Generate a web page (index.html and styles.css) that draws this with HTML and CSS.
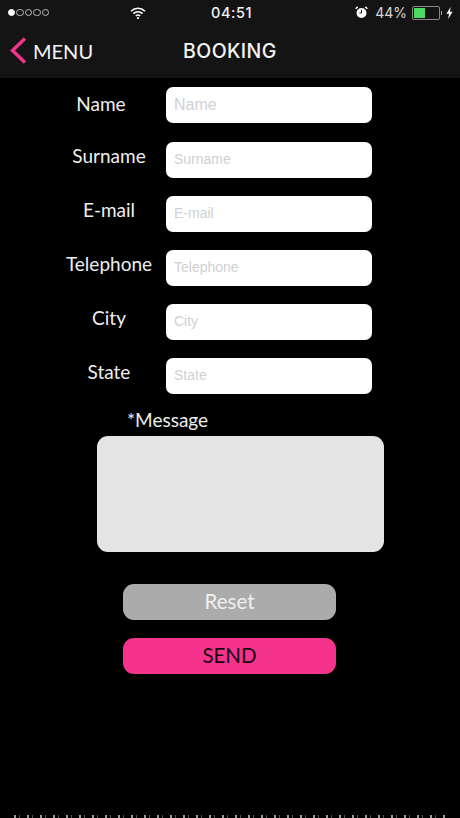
FILE: index.html
```html
<!DOCTYPE html>
<html>
<head>
<title>Booking</title>
<link rel="stylesheet" href="styles.css">
</head>
<body>
<div class="screen">
  <div class="topbar">
    <div class="status">
      <div class="signal"><i class="on"></i><i></i><i></i><i></i><i></i></div>
      <svg class="wifi" width="16" height="12" viewBox="0 0 16 12">
        <path d="M1 4.2a10 10 0 0 1 14 0" fill="none" stroke="#fff" stroke-width="1.5"/>
        <path d="M3.4 6.6a6.6 6.6 0 0 1 9.2 0" fill="none" stroke="#fff" stroke-width="1.5"/>
        <path d="M5.8 9a3.2 3.2 0 0 1 4.4 0" fill="none" stroke="#fff" stroke-width="1.5"/>
        <circle cx="8" cy="11" r="1.1" fill="#fff"/>
      </svg>
      <div class="time">04:51</div>
      <div class="status-right">
        <svg class="alarm" width="13" height="13" viewBox="0 0 13 13">
          <circle cx="6.5" cy="7" r="5" fill="#fff"/>
          <path d="M6.5 3.8V7H4.4" fill="none" stroke="#141414" stroke-width="1"/>
          <path d="M0.6 2.8L2.8 0.9M12.4 2.8L10.2 0.9" stroke="#fff" stroke-width="1.4"/>
        </svg>
        <span class="percent">44%</span>
        <div class="battery"><div class="level"></div></div>
        <div class="nub"></div>
        <svg class="bolt" width="7" height="12" viewBox="0 0 7 12">
          <path d="M4.6 0L0.4 6.8H3L2.2 12L6.6 4.8H3.9Z" fill="#fff"/>
        </svg>
      </div>
    </div>
    <div class="navbar">
      <a class="back">
        <svg width="18" height="27" viewBox="0 0 18 27">
          <path d="M16 1.5L3.5 13.5L16 25.5" fill="none" stroke="#f5328c" stroke-width="3.4"/>
        </svg>
        <span>MENU</span>
      </a>
      <div class="title">BOOKING</div>
    </div>
  </div>

  <div class="form">
    <div class="row first"><label class="name-label">Name</label><div class="field big">Name</div></div>
    <div class="row"><label>Surname</label><div class="field">Surname</div></div>
    <div class="row"><label>E-mail</label><div class="field">E-mail</div></div>
    <div class="row"><label>Telephone</label><div class="field">Telephone</div></div>
    <div class="row"><label>City</label><div class="field">City</div></div>
    <div class="row"><label>State</label><div class="field">State</div></div>
    <div class="message-label">*Message</div>
    <div class="message"></div>
    <div class="btn reset">Reset</div>
    <div class="btn send">SEND</div>
  </div>

  <div class="noise"></div>
</div>
</body>
</html>
```

FILE: styles.css
```css
html, body {
  margin: 0;
  padding: 0;
  background: #000;
}

.screen {
  width: 460px;
  height: 818px;
  display: flex;
  flex-direction: column;
  overflow: hidden;
  font-family: "Lato", "Open Sans", sans-serif;
  color: #fff;
}

.topbar {
  height: 78px;
  flex: none;
  background: #141414;
}

.status {
  height: 25px;
  display: flex;
  align-items: center;
  padding: 0 7px 0 8px;
}

.signal {
  display: flex;
  gap: 1px;
}

.signal i {
  width: 5.4px;
  height: 5.4px;
  border: 0.8px solid #bbb;
  border-radius: 50%;
  box-sizing: content-box;
}

.signal i.on {
  background: #fff;
  border-color: #fff;
}

.wifi {
  margin-left: 81px;
}

.time {
  margin-left: 65px;
  font-family: "Inter", sans-serif;
  font-size: 14.5px;
  font-weight: 500;
  letter-spacing: 0.6px;
  color: #f2f2f2;
}

.status-right {
  margin-left: auto;
  display: flex;
  align-items: center;
}

.alarm {
  margin-right: 7px;
}

.percent {
  font-family: "Inter", sans-serif;
  font-size: 14px;
  color: #d8d8d8;
  margin-right: 5px;
}

.battery {
  width: 24px;
  height: 10px;
  border: 1px solid #8a8a8a;
  border-radius: 2px;
  padding: 1px;
}

.level {
  width: 11px;
  height: 10px;
  background: #4cd964;
}

.nub {
  width: 1px;
  height: 4px;
  background: #aaa;
  margin-left: 1px;
  margin-right: 4px;
}

.navbar {
  height: 53px;
  margin-top: -1px;
  display: flex;
  align-items: center;
}

.back {
  display: flex;
  align-items: center;
  gap: 6px;
  padding-left: 9px;
  font-size: 20px;
  color: #f4f4f4;
}

.title {
  margin-left: 90px;
  font-family: "Inter", sans-serif;
  font-size: 19.5px;
  font-weight: 500;
  letter-spacing: 0.4px;
  color: #f5f5f5;
}

.form {
  display: flex;
  flex-direction: column;
  padding-top: 9px;
}

.row {
  display: flex;
  height: 36px;
  margin-bottom: 18px;
}

.row.first {
  margin-bottom: 19px;
}

.row label {
  width: 166px;
  padding-left: 52px;
  box-sizing: border-box;
  text-align: center;
  font-size: 19px;
  line-height: 28px;
  color: #eee;
}

.row label.name-label {
  padding-left: 36px;
  line-height: 33px;
}

.field {
  width: 206px;
  height: 36px;
  box-sizing: border-box;
  background: #fff;
  border-radius: 7px;
  padding-left: 8px;
  font-family: "Liberation Sans", sans-serif;
  font-size: 14px;
  line-height: 35px;
  color: #d0d0d4;
}

.field.big {
  font-size: 16px;
}

.message-label {
  margin: -5px 0 0 127px;
  font-size: 19px;
  line-height: 26px;
  color: #eee;
}

.message {
  width: 287px;
  height: 116px;
  margin: 3px 0 0 97px;
  background: #e4e4e4;
  border-radius: 11px;
}

.btn {
  width: 213px;
  height: 36px;
  margin-left: 123px;
  border-radius: 11px;
  text-align: center;
  font-size: 20.5px;
  line-height: 35px;
}

.reset {
  margin-top: 32px;
  background: #ababab;
  color: #f0f0f0;
}

.send {
  margin-top: 18px;
  background: #f5328c;
  color: #1a0412;
}

.noise {
  height: 3px;
  margin: auto 0 0 14px;
  width: 432px;
  background: repeating-linear-gradient(90deg, #9a9a9a 0 2px, #000 2px 5px, #555 5px 6px, #000 6px 13px);
}
```
